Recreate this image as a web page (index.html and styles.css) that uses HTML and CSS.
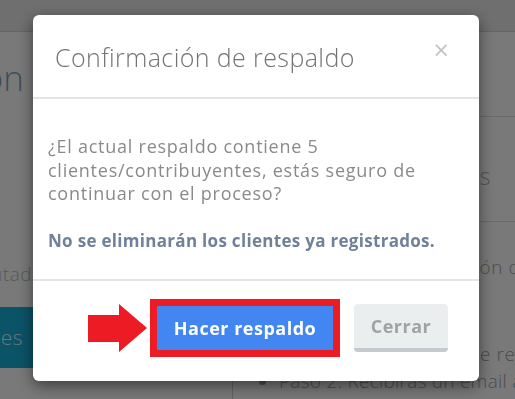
FILE: index.html
```html
<!DOCTYPE html>
<html lang="es">
<head>
<meta charset="utf-8">
<title>Confirmación de respaldo</title>
<link rel="stylesheet" href="styles.css">
</head>
<body>
<div class="page">
  <div class="topbar"></div>
  <div class="main">
    <div class="left">
      <div class="end-anchor title-anchor"><h1 class="page-title">Configuración</h1></div>
      <div class="end-anchor note-anchor"><p class="left-note">Respaldo computado</p></div>
      <div class="teal-btn"><div class="end-anchor teal-anchor"><span>Clientes</span></div></div>
    </div>
    <div class="right">
      <div class="panel">
        <div class="panel-head"><div class="end-anchor head-anchor"><span>Instrucciones</span></div></div>
        <p class="panel-line desc-line"><span class="end-anchor desc-anchor"><span>Descripción</span></span><span>&nbsp;de respaldo</span></p>
        <p class="panel-line step-line"><span class="end-anchor step-anchor"><span>Paso 1: Solicita el respaldo de</span></span><span>&nbsp;respaldo</span></p>
        <ul class="steps"><li>Paso 2: Recibirás un email a</li></ul>
      </div>
    </div>
  </div>
</div>

<div class="backdrop"></div>

<div class="modal" role="dialog">
  <div class="modal-header">
    <h4 class="modal-title">Confirmación de respaldo</h4>
    <span class="close">×</span>
  </div>
  <div class="modal-body">
    <p class="question">¿El actual respaldo contiene 5 clientes/contribuyentes, estás seguro de continuar con el proceso?</p>
    <p class="notice">No se eliminarán los clientes ya registrados.</p>
  </div>
  <div class="modal-footer">
    <svg class="arrow" width="60" height="48" viewBox="0 0 60 48"><polygon points="0,11 31,11 31,0 59,24 31,48 31,38 0,38" fill="#ed1c24"/></svg>
    <div class="highlight"><button class="btn btn-primary">Hacer respaldo</button></div>
    <button class="btn btn-default">Cerrar</button>
  </div>
</div>
</body>
</html>
```
FILE: styles.css
```css
* { box-sizing: border-box; }
html, body { margin: 0; padding: 0; }
body {
  width: 515px;
  height: 399px;
  overflow: hidden;
  font-family: "Open Sans", Lato, sans-serif;
}
.page {
  width: 515px;
  height: 399px;
  background: #f3f3f3;
  overflow: hidden;
}
.topbar {
  height: 32px;
  background: #dedede;
  border-bottom: 1px solid #c8c8c8;
}
.main {
  display: grid;
  grid-template-columns: 232px 1fr;
  height: 367px;
}
.left {
  overflow: hidden;
  white-space: nowrap;
}
/* the page is scrolled sideways: these boxes pin the end of a text to a point */
.end-anchor {
  display: flex;
  justify-content: flex-end;
  white-space: nowrap;
  flex: none;
}
.end-anchor > * { flex: none; }
.title-anchor { width: 24px; margin-top: 18px; }
.page-title {
  margin: 0;
  font-size: 35px;
  font-weight: 300;
  color: #7f9bb0;
  line-height: 56px;
}
.note-anchor { width: 44px; margin-top: 155px; }
.left-note {
  margin: 0;
  font-size: 19px;
  font-weight: 300;
  letter-spacing: 0.6px;
  color: #b0b0b0;
  line-height: 26px;
}
.teal-btn {
  margin-top: 20px;
  height: 61px;
  background: #17a6cf;
  color: #d8e8ee;
  font-size: 21px;
  font-weight: 300;
  letter-spacing: 0.5px;
  line-height: 60px;
}
.teal-anchor { width: 23px; }
.right {
  border-left: 1px solid #c8c8c8;
  overflow: hidden;
  white-space: nowrap;
}
.panel {
  padding-top: 84px;
}
.panel-head {
  border-top: 1px solid #d6d6d6;
  border-bottom: 1px solid #d6d6d6;
  height: 106px;
  padding-top: 44px;
  font-size: 23px;
  font-weight: 300;
  letter-spacing: 0.6px;
  color: #a8a8a8;
  line-height: 30px;
}
.head-anchor { width: 258px; }
.panel-line {
  display: flex;
  margin: 32px 0 0 0;
  font-size: 19px;
  font-weight: 300;
  letter-spacing: 0.6px;
  color: #9a9a9a;
  line-height: 26px;
}
.desc-anchor { width: 270px; }
.step-line { margin-top: 61px; }
.step-anchor { width: 258px; }
.steps {
  margin: 1px 0 0 0;
  padding-left: 46px;
  font-size: 19px;
  font-weight: 300;
  letter-spacing: 0.25px;
  color: #9a9a9a;
  line-height: 26px;
}
.backdrop {
  position: fixed;
  inset: 0;
  background: rgba(0, 0, 0, 0.5);
}
.modal {
  position: fixed;
  left: 33px;
  top: 15px;
  width: 446px;
  height: 366px;
  background: #fff;
  border-radius: 6px;
  box-shadow: 0 5px 15px rgba(0, 0, 0, 0.5);
  display: flex;
  flex-direction: column;
}
.modal-header {
  height: 84px;
  border-bottom: 2px solid #e5e5e5;
  padding: 27px 30px 0 22px;
  display: flex;
  justify-content: space-between;
  align-items: flex-start;
}
.modal-title {
  margin: 0;
  font-size: 25px;
  font-weight: 300;
  letter-spacing: 0.4px;
  color: #737373;
  line-height: 30px;
}
.close {
  font-size: 27px;
  line-height: 24px;
  color: #c4c4c4;
  font-weight: 400;
  margin-top: -4px;
}
.modal-body {
  height: 182px;
  border-bottom: 2px solid #e5e5e5;
  padding: 36px 15px 0 15px;
}
.question {
  margin: 0;
  font-size: 18px;
  letter-spacing: 0.75px;
  line-height: 23.5px;
  color: #8a8a8a;
}
.notice {
  margin: 23px 0 0 0;
  font-size: 17px;
  font-weight: 700;
  letter-spacing: 0.3px;
  color: #6f8299;
  line-height: 24px;
}
.modal-footer {
  flex: 1;
  display: flex;
  justify-content: flex-end;
  align-items: center;
  padding: 0 31px 6px 0;
}
.arrow { display: block; margin-right: 2px; }
.highlight {
  border: 7px solid #ed1c24;
  margin-right: 14px;
}
.btn {
  font-family: inherit;
  font-size: 18px;
  font-weight: 700;
  letter-spacing: 0.5px;
  border: 0;
  margin: 0;
  padding: 0;
  cursor: pointer;
}
.btn-primary {
  display: block;
  width: 176px;
  height: 44px;
  background: #4286f2;
  color: #fff;
}
.btn-default {
  width: 94px;
  height: 48px;
  background: #ebeeef;
  color: #a2a2a2;
  border-radius: 4px;
  border-bottom: 4px solid #c4cacd;
}
```
